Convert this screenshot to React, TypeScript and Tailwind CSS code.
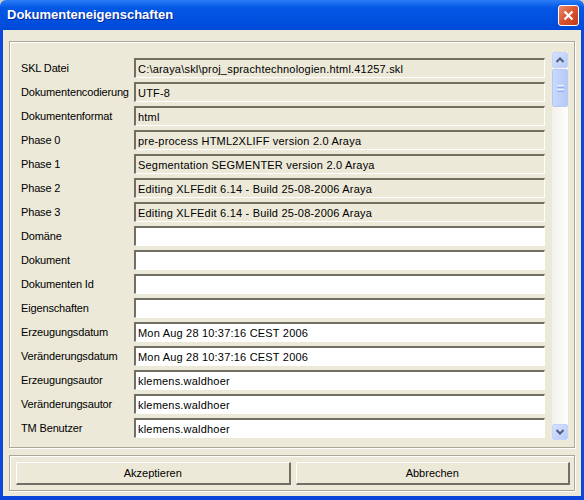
const fields: { label: string; value: string; readOnly: boolean }[] = [
  { label: "SKL Datei", value: "C:\\araya\\skl\\proj_sprachtechnologien.html.41257.skl", readOnly: true },
  { label: "Dokumentencodierung", value: "UTF-8", readOnly: true },
  { label: "Dokumentenformat", value: "html", readOnly: true },
  { label: "Phase 0", value: "pre-process HTML2XLIFF version 2.0 Araya", readOnly: true },
  { label: "Phase 1", value: "Segmentation SEGMENTER version 2.0 Araya", readOnly: true },
  { label: "Phase 2", value: "Editing XLFEdit 6.14 - Build 25-08-2006 Araya", readOnly: true },
  { label: "Phase 3", value: "Editing XLFEdit 6.14 - Build 25-08-2006 Araya", readOnly: true },
  { label: "Domäne", value: "", readOnly: false },
  { label: "Dokument", value: "", readOnly: false },
  { label: "Dokumenten Id", value: "", readOnly: false },
  { label: "Eigenschaften", value: "", readOnly: false },
  { label: "Erzeugungsdatum", value: "Mon Aug 28 10:37:16 CEST 2006", readOnly: false },
  { label: "Veränderungsdatum", value: "Mon Aug 28 10:37:16 CEST 2006", readOnly: false },
  { label: "Erzeugungsautor", value: "klemens.waldhoer", readOnly: false },
  { label: "Veränderungsautor", value: "klemens.waldhoer", readOnly: false },
  { label: "TM Benutzer", value: "klemens.waldhoer", readOnly: false },
];

const ScrollButton = ({ up }: { up: boolean }) => (
  <div className="w-[16px] h-[16px] rounded-[2px] border border-[#C3D3FD] bg-gradient-to-br from-[#D4E0FD] to-[#B9CCF7] flex items-center justify-center">
    <svg width="8" height="6" viewBox="0 0 8 6">
      <path
        d={up ? "M0.5 5 L4 1.5 L7.5 5" : "M0.5 1 L4 4.5 L7.5 1"}
        fill="none"
        stroke="#4D6185"
        strokeWidth="2"
      />
    </svg>
  </div>
);

const App = () => {
  return (
    <div className="w-[584px] h-[500px] bg-[#D4D0C8] font-['Liberation_Sans',Arial,sans-serif] text-[11px] text-black">
      <div className="w-full h-full flex flex-col rounded-t-[6px] overflow-hidden">
        {/* title bar */}
        <div className="h-[30px] shrink-0 flex items-center pl-[7px] pr-[5px] bg-gradient-to-b from-[#2A7DF6] via-[#0458E6] via-[25%] to-[#0049D8]">
          <span className="flex-1 text-white font-bold text-[13px] [text-shadow:1px_1px_0_#0A2A9A]">
            Dokumenteneigenschaften
          </span>
          <div className="w-[21px] h-[21px] rounded-[3px] border border-white bg-gradient-to-br from-[#E8886A] via-[#D9532E] to-[#C03A17] flex items-center justify-center">
            <svg width="11" height="11" viewBox="0 0 11 11">
              <path d="M1.5 1.5 L9.5 9.5 M9.5 1.5 L1.5 9.5" stroke="white" strokeWidth="2.2" />
            </svg>
          </div>
        </div>

        {/* body with frame */}
        <div className="flex-1 flex flex-col bg-[#ECE9D8] border-l-[3px] border-r-[3px] border-b-[4px] border-[#0A47DA] px-[6px] pt-[11px] pb-[5px]">
          {/* fields panel */}
          <div className="h-[407px] border border-[#ACA899] shadow-[inset_1px_1px_0_#fff,1px_1px_0_#fff] flex">
            <div className="flex-1 flex flex-col pl-[11px] pt-[14px]">
              {fields.map((f) => (
                <div key={f.label} className="h-[24px] shrink-0 flex items-center">
                  <span className="w-[113px] shrink-0 pt-[1px] whitespace-nowrap tracking-[-0.15px]">{f.label}</span>
                  <div
                    className={`w-[411px] h-[20px] flex items-center pl-[2px] pt-[1px] whitespace-nowrap tracking-[0.2px] border-t-2 border-l-2 border-t-[#716F64] border-l-[#716F64] border-b border-r border-b-white border-r-white ${
                      f.readOnly ? "bg-[#ECE9D8]" : "bg-white"
                    }`}
                  >
                    {f.value}
                  </div>
                </div>
              ))}
            </div>
            <div className="w-[16px] mt-[10px] mr-[6px] h-[388px] flex flex-col bg-gradient-to-r from-[#F3F1EC] to-[#FEFEFB]">
              <ScrollButton up />
              <div className="mt-[1px] h-[38px] rounded-[2px] border border-[#B6C9F5] bg-gradient-to-r from-[#C9D8FC] to-[#B7CBF7] flex flex-col items-center justify-center gap-[1px]">
                <div className="w-[7px] h-[1px] bg-[#EEF4FE]" />
                <div className="w-[7px] h-[1px] bg-[#8CB0F8]" />
                <div className="w-[7px] h-[1px] bg-[#EEF4FE]" />
                <div className="w-[7px] h-[1px] bg-[#8CB0F8]" />
              </div>
              <div className="flex-1" />
              <ScrollButton up={false} />
            </div>
          </div>

          {/* buttons panel */}
          <div className="mt-[7px] h-[36px] border border-[#ACA899] shadow-[inset_1px_1px_0_#fff,1px_1px_0_#fff] flex gap-[5px] pl-[6px] pr-[4px] pt-[6px]">
            {["Akzeptieren", "Abbrechen"].map((b) => (
              <div
                key={b}
                className="flex-1 h-[23px] flex items-center justify-center border-t border-l border-white border-b-2 border-r-2 border-b-[#716F64] border-r-[#716F64] bg-[#ECE9D8]"
              >
                {b}
              </div>
            ))}
          </div>
        </div>
      </div>
    </div>
  );
};

export default App;
